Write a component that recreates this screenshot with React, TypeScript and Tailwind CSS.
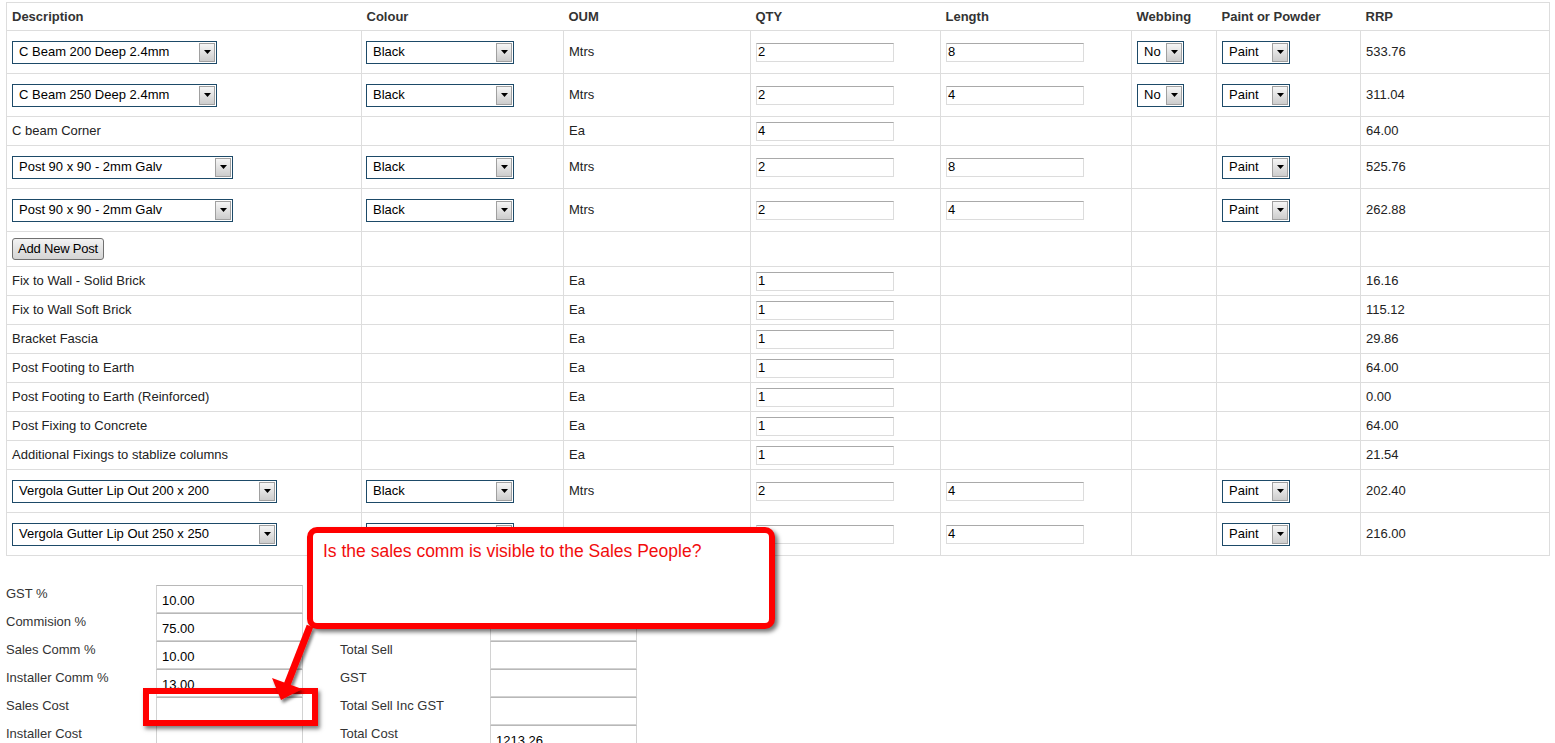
import React from 'react';

type Row = {
  kind: 'select' | 'text' | 'button';
  desc: string;
  descW?: string;
  colour?: boolean;
  oum?: string;
  qty?: string;
  length?: string;
  webbing?: boolean;
  paint?: boolean;
  rrp?: string;
  h: string;
};

const ROWS: Row[] = [
  { kind: 'select', desc: 'C Beam 200 Deep 2.4mm', descW: 'w-[205px]', colour: true, oum: 'Mtrs', qty: '2', length: '8', webbing: true, paint: true, rrp: '533.76', h: 'h-[43px]' },
  { kind: 'select', desc: 'C Beam 250 Deep 2.4mm', descW: 'w-[205px]', colour: true, oum: 'Mtrs', qty: '2', length: '4', webbing: true, paint: true, rrp: '311.04', h: 'h-[43px]' },
  { kind: 'text', desc: 'C beam Corner', oum: 'Ea', qty: '4', rrp: '64.00', h: 'h-[29px]' },
  { kind: 'select', desc: 'Post 90 x 90 - 2mm Galv', descW: 'w-[221px]', colour: true, oum: 'Mtrs', qty: '2', length: '8', paint: true, rrp: '525.76', h: 'h-[43px]' },
  { kind: 'select', desc: 'Post 90 x 90 - 2mm Galv', descW: 'w-[221px]', colour: true, oum: 'Mtrs', qty: '2', length: '4', paint: true, rrp: '262.88', h: 'h-[43px]' },
  { kind: 'button', desc: 'Add New Post', h: 'h-[35px]' },
  { kind: 'text', desc: 'Fix to Wall - Solid Brick', oum: 'Ea', qty: '1', rrp: '16.16', h: 'h-[29px]' },
  { kind: 'text', desc: 'Fix to Wall Soft Brick', oum: 'Ea', qty: '1', rrp: '115.12', h: 'h-[29px]' },
  { kind: 'text', desc: 'Bracket Fascia', oum: 'Ea', qty: '1', rrp: '29.86', h: 'h-[29px]' },
  { kind: 'text', desc: 'Post Footing to Earth', oum: 'Ea', qty: '1', rrp: '64.00', h: 'h-[29px]' },
  { kind: 'text', desc: 'Post Footing to Earth (Reinforced)', oum: 'Ea', qty: '1', rrp: '0.00', h: 'h-[29px]' },
  { kind: 'text', desc: 'Post Fixing to Concrete', oum: 'Ea', qty: '1', rrp: '64.00', h: 'h-[29px]' },
  { kind: 'text', desc: 'Additional Fixings to stablize columns', oum: 'Ea', qty: '1', rrp: '21.54', h: 'h-[29px]' },
  { kind: 'select', desc: 'Vergola Gutter Lip Out 200 x 200', descW: 'w-[265px]', colour: true, oum: 'Mtrs', qty: '2', length: '4', paint: true, rrp: '202.40', h: 'h-[43px]' },
  { kind: 'select', desc: 'Vergola Gutter Lip Out 250 x 250', descW: 'w-[265px]', colour: true, oum: 'Mtrs', qty: '2', length: '4', paint: true, rrp: '216.00', h: 'h-[43px]' },
];

const LEFT_FIELDS = [
  { label: 'GST %', value: '10.00' },
  { label: 'Commision %', value: '75.00' },
  { label: 'Sales Comm %', value: '10.00' },
  { label: 'Installer Comm %', value: '13.00' },
  { label: 'Sales Cost', value: '' },
  { label: 'Installer Cost', value: '' },
];

const RIGHT_FIELDS = [
  { label: '', value: '' },
  { label: '', value: '' },
  { label: 'Total Sell', value: '' },
  { label: 'GST', value: '' },
  { label: 'Total Sell Inc GST', value: '' },
  { label: 'Total Cost', value: '1213.26' },
];

const Dropdown = ({ w, text }: { w: string; text: string }) => (
  <div className={`${w} h-[23px] flex border border-[#1d4a68] bg-white`}>
    <span className="flex-1 pl-[6px] flex items-center text-[13px] text-black whitespace-nowrap overflow-hidden">{text}</span>
    <span className="w-[16px] my-px mr-px border border-[#a0a0a0] bg-linear-to-b from-[#f6f6f6] to-[#cdcdcd] flex items-center justify-center">
      <svg width="7" height="4" viewBox="0 0 7 4">
        <polygon points="0,0 7,0 3.5,4" fill="#000" />
      </svg>
    </span>
  </div>
);

const CellInput = ({ value }: { value: string }) => (
  <input
    defaultValue={value}
    className="block w-[138px] h-[19px] border border-[#dcdcdc] border-t-[#a9a9a9] pl-px text-[13px] text-black bg-white outline-none"
  />
);

const FormInput = ({ value }: { value: string }) => (
  <input
    defaultValue={value}
    className="block w-[147px] h-[28px] border border-[#d2d2d2] border-t-[#b8b8b8] px-[5px] pt-[3px] text-[13px] text-black bg-white outline-none"
  />
);

const App: React.FC = () => {
  return (
    <div className="relative min-h-[743px] bg-white font-['Liberation_Sans',Arial,sans-serif] text-[13px] text-[#333]">
      <div className="px-[6px] pt-[2px]">
        <table className="w-full table-fixed border-collapse border border-[#ddd]">
          <colgroup>
            <col className="w-[355px]" />
            <col className="w-[202px]" />
            <col className="w-[187px]" />
            <col className="w-[190px]" />
            <col className="w-[191px]" />
            <col className="w-[85px]" />
            <col className="w-[144px]" />
            <col className="w-[189px]" />
          </colgroup>
          <thead>
            <tr className="h-[28px]">
              {['Description', 'Colour', 'OUM', 'QTY', 'Length', 'Webbing', 'Paint or Powder', 'RRP'].map(h => (
                <th key={h} className="px-[5px] text-left font-bold text-[#333]">{h}</th>
              ))}
            </tr>
          </thead>
          <tbody className="text-[#222]">
            {ROWS.map((r, i) => (
              <tr key={i} className={r.h}>
                <td className="border border-[#ddd] px-[5px]">
                  {r.kind === 'select' && <Dropdown w={r.descW || 'w-[205px]'} text={r.desc} />}
                  {r.kind === 'text' && <span>{r.desc}</span>}
                  {r.kind === 'button' && (
                    <button className="h-[22px] px-[5px] rounded-[3px] border border-[#707070] bg-linear-to-b from-[#f3f3f3] to-[#d4d4d4] text-[13px] text-black tracking-[-0.2px]">
                      Add New Post
                    </button>
                  )}
                </td>
                <td className="border border-[#ddd] px-[4px]">
                  {r.colour && <Dropdown w="w-[148px]" text="Black" />}
                </td>
                <td className="border border-[#ddd] px-[5px]">{r.oum}</td>
                <td className="border border-[#ddd] px-[5px]">{r.qty && <CellInput value={r.qty} />}</td>
                <td className="border border-[#ddd] px-[5px]">{r.length && <CellInput value={r.length} />}</td>
                <td className="border border-[#ddd] px-[5px]">{r.webbing && <Dropdown w="w-[47px]" text="No" />}</td>
                <td className="border border-[#ddd] px-[5px]">{r.paint && <Dropdown w="w-[68px]" text="Paint" />}</td>
                <td className="border border-[#ddd] px-[5px]">{r.rrp}</td>
              </tr>
            ))}
          </tbody>
        </table>
      </div>

      {/* totals form */}
      <div className="mt-[29px] px-[6px] grid grid-cols-[150px_147px_37px_150px_147px]">
        {LEFT_FIELDS.map((f, i) => (
          <React.Fragment key={f.label}>
            <div className="h-[28px] leading-[15px] pt-px text-[#333]">{f.label}</div>
            <FormInput value={f.value} />
            <div />
            <div className="h-[28px] leading-[15px] pt-px text-[#333]">{RIGHT_FIELDS[i].label}</div>
            <FormInput value={RIGHT_FIELDS[i].value} />
          </React.Fragment>
        ))}
      </div>

      {/* annotation overlay */}
      <div className="absolute left-[307px] top-[527px] w-[468px] h-[102px] rounded-[10px] border-[6px] border-[#ff0000] bg-white shadow-[3px_3px_4px_rgba(0,0,0,0.55)] pl-[10px] pt-[8px]">
        <p className="text-[17.5px] leading-[20px] text-[#f20d0d]">Is the sales comm is visible to the Sales People?</p>
      </div>
      <div className="absolute left-[143px] top-[688px] w-[175px] h-[38px] border-[6px] border-[#ff0000] shadow-[2px_3px_4px_rgba(0,0,0,0.5)]" />
      <svg className="absolute left-0 top-0 pointer-events-none" width="1555" height="743">
        <defs>
          <filter id="sh" x="-50%" y="-50%" width="200%" height="200%">
            <feDropShadow dx="2" dy="3" stdDeviation="1.5" floodColor="#000" floodOpacity="0.5" />
          </filter>
        </defs>
        <g filter="url(#sh)">
          <line x1="310" y1="626" x2="287" y2="685" stroke="#ff0000" strokeWidth="7" />
          <polygon points="272,678 302,689 281,700" fill="#ff0000" />
        </g>
      </svg>
    </div>
  );
};

export default App;
